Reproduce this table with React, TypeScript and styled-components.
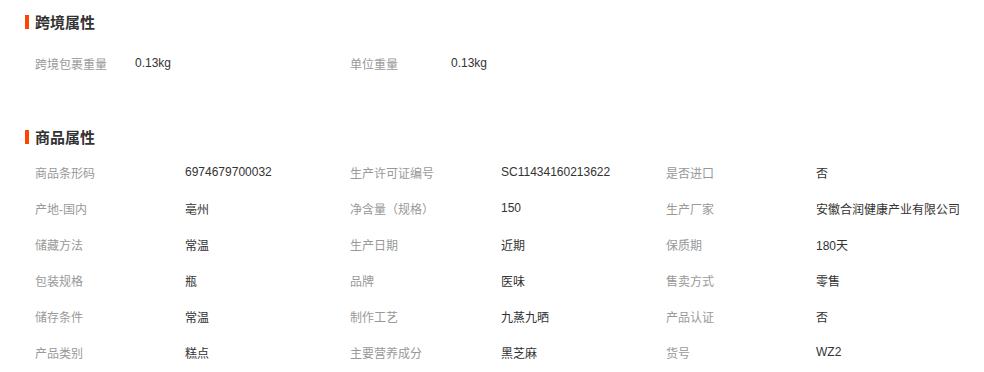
import styled, { createGlobalStyle } from "styled-components";

const GlobalStyle = createGlobalStyle`
  body {
    margin: 0;
    background: #fff;
    font-family: "Liberation Sans", "Noto Sans CJK SC", sans-serif;
    font-size: 12px;
    color: #333;
  }
`;

const Page = styled.div`
  width: 984px;
  padding-top: 14px;
`;

const Section = styled.section<{ gap: number }>`
  margin-bottom: ${(props) => props.gap}px;
`;

const Header = styled.h3<{ after: number }>`
  display: flex;
  align-items: center;
  gap: 6px;
  margin: 0 0 ${(props) => props.after}px 25px;
  height: 16px;
  line-height: 16px;
  font-size: 15px;
  font-weight: bold;
  color: #333;
  font-family: "Noto Sans CJK SC", sans-serif;
`;

const Bar = styled.span`
  width: 4px;
  height: 14px;
  background-color: #ff4400;
`;

const Table = styled.div<{ cols: string }>`
  display: grid;
  grid-template-columns: ${(props) => props.cols};
  grid-auto-rows: 36px;
  padding-left: 35px;
`;

const Cell = styled.div<{ isLabel?: boolean }>`
  display: flex;
  align-items: center;
  white-space: nowrap;
  color: ${(props) => (props.isLabel ? "#999" : "#333")};
`;

const crossBorder = [
  ["跨境包裹重量", "0.13kg"],
  ["单位重量", "0.13kg"],
];

const product = [
  ["商品条形码", "6974679700032"],
  ["生产许可证编号", "SC11434160213622"],
  ["是否进口", "否"],
  ["产地-国内", "亳州"],
  ["净含量（规格）", "150"],
  ["生产厂家", "安徽合润健康产业有限公司"],
  ["储藏方法", "常温"],
  ["生产日期", "近期"],
  ["保质期", "180天"],
  ["包装规格", "瓶"],
  ["品牌", "医味"],
  ["售卖方式", "零售"],
  ["储存条件", "常温"],
  ["制作工艺", "九蒸九晒"],
  ["产品认证", "否"],
  ["产品类别", "糕点"],
  ["主要营养成分", "黑芝麻"],
  ["货号", "WZ2"],
];

function Pairs({ items }: { items: string[][] }) {
  return (
    <>
      {items.map(([label, value]) => [
        <Cell isLabel key={label}>
          {label}
        </Cell>,
        <Cell key={label + "-v"}>{value}</Cell>,
      ])}
    </>
  );
}

function App() {
  return (
    <Page>
      <GlobalStyle />
      <Section gap={48}>
        <Header after={15}>
          <Bar />
          跨境属性
        </Header>
        <Table cols="100px 215px 101px 1fr">
          <Pairs items={crossBorder} />
        </Table>
      </Section>
      <Section gap={0}>
        <Header after={9}>
          <Bar />
          商品属性
        </Header>
        <Table cols="150px 165px 151px 165px 150px 1fr">
          <Pairs items={product} />
        </Table>
      </Section>
    </Page>
  );
}

export default App;
